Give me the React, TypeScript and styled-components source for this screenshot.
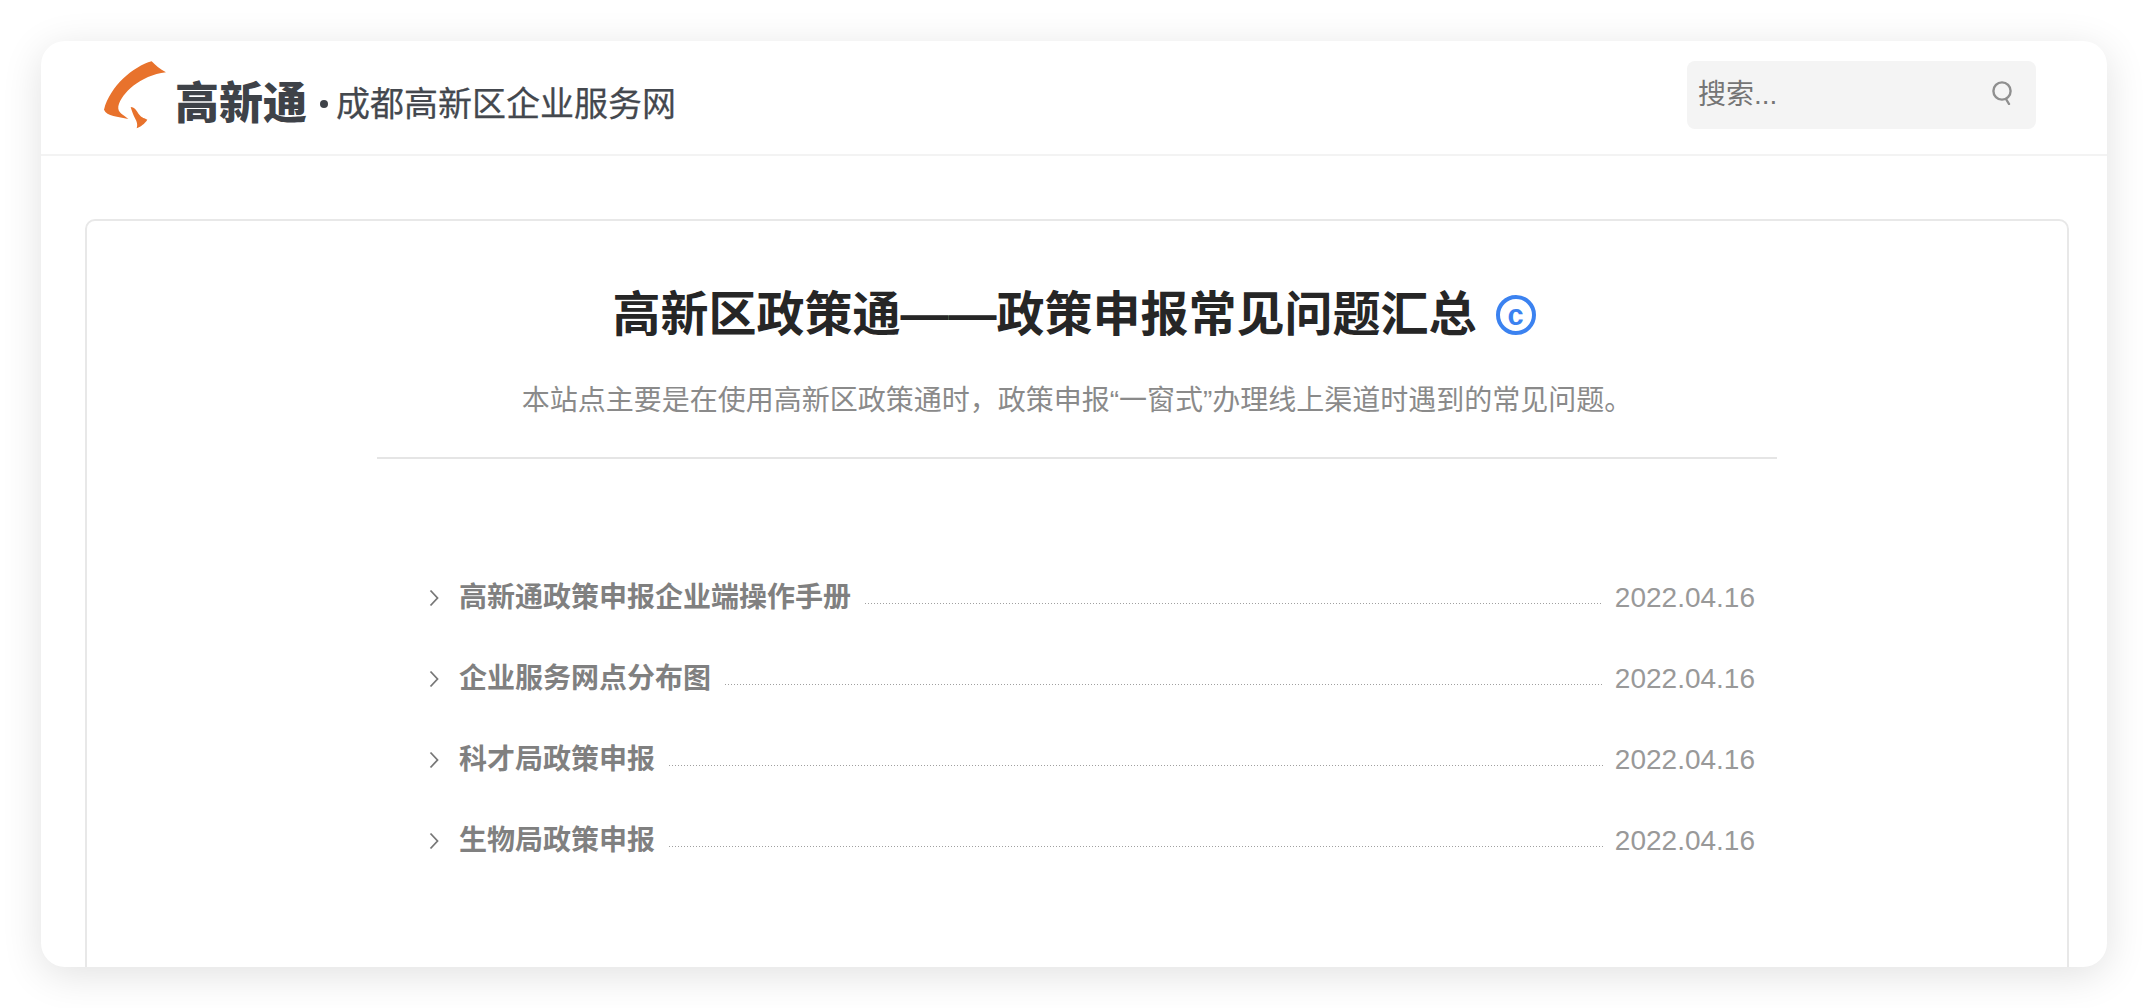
import React from 'react'
import styled, { createGlobalStyle } from 'styled-components'

const GlobalStyle = createGlobalStyle`
  html, body {
    margin: 0;
    padding: 0;
    background: #fff;
    font-family: "Liberation Sans", "Noto Sans CJK SC", sans-serif;
  }
  * {
    box-sizing: border-box;
  }
`

const items = [
  { id: 1, title: '高新通政策申报企业端操作手册', date: '2022.04.16' },
  { id: 2, title: '企业服务网点分布图', date: '2022.04.16' },
  { id: 3, title: '科才局政策申报', date: '2022.04.16' },
  { id: 4, title: '生物局政策申报', date: '2022.04.16' }
]

const App = () => {
  return (
    <Page>
      <GlobalStyle />
      <Frame>
        <Header>
          <Logo>
            <svg width="70" height="75" viewBox="30 25 210 225">
              <path
                fill="#e8722c"
                d="M185 35 C130 50 60 110 42 180 C50 200 85 200 115 208 C100 195 82 190 85 170 C95 130 150 78 228 68 C210 60 195 45 185 35 Z"
              />
              <path
                fill="#e8722c"
                d="M122 172 C135 172 140 185 148 195 C155 205 165 205 172 210 C165 222 150 232 140 236 C145 222 138 212 132 200 C128 190 125 182 122 172 Z"
              />
            </svg>
            <LogoName>高新通</LogoName>
            <LogoDot />
            <LogoSlogan>成都高新区企业服务网</LogoSlogan>
          </Logo>
          <Search>
            <SearchInput placeholder="搜索..." />
            <SearchIcon width="22" height="24" viewBox="0 0 22 24" fill="none" stroke="#8f8f8f" strokeWidth="2.4">
              <circle cx="11" cy="10" r="8.6" />
              <path d="M15 18 L18 23" strokeLinecap="round" />
            </SearchIcon>
          </Search>
        </Header>
        <Body>
          <Card>
            <Intro>
              <TitleRow>
                <Title>高新区政策通——政策申报常见问题汇总</Title>
                <CopyMark>c</CopyMark>
              </TitleRow>
              <Subtitle>本站点主要是在使用高新区政策通时，政策申报“一窗式”办理线上渠道时遇到的常见问题。</Subtitle>
            </Intro>
            <List>
              {items.map((item) => (
                <Row key={item.id}>
                  <svg width="10" height="18" viewBox="0 0 10 18" fill="none" stroke="#777" strokeWidth="1.8">
                    <path d="M1.5 1.5 L8.5 9 L1.5 16.5" />
                  </svg>
                  <RowTitle>{item.title}</RowTitle>
                  <Dots />
                  <RowDate>{item.date}</RowDate>
                </Row>
              ))}
            </List>
          </Card>
        </Body>
      </Frame>
    </Page>
  )
}

const Page = styled.div`
  height: 1008px;
  padding: 41px 41px 0;
  overflow: hidden;
`
const Frame = styled.div`
  height: 926px;
  background: #fff;
  border-radius: 24px;
  box-shadow: 0 8px 40px rgba(0, 0, 0, 0.12);
  overflow: hidden;
  display: flex;
  flex-direction: column;
`
const Header = styled.div`
  flex: 0 0 115px;
  display: flex;
  align-items: center;
  justify-content: space-between;
  padding: 0 71px 5px 59px;
  border-bottom: 2px solid #f3f3f3;
`
const Logo = styled.div`
  display: flex;
  align-items: center;
`
const LogoName = styled.span`
  margin: 18px 0 0 5px;
  font-size: 44px;
  line-height: 48px;
  font-weight: 900;
  color: #3e4248;
`
const LogoDot = styled.span`
  width: 8px;
  height: 8px;
  margin: 18px 8px 0 13px;
  border-radius: 50%;
  background: #3e4248;
`
const LogoSlogan = styled.span`
  margin-top: 18px;
  font-size: 34px;
  line-height: 40px;
  font-weight: 400;
  color: #44484e;
  -webkit-text-stroke: 0.25px #44484e;
`
const Search = styled.div`
  width: 349px;
  height: 68px;
  display: flex;
  align-items: center;
  padding: 0 23px 0 11px;
  background: #f4f4f4;
  border-radius: 8px;
`
const SearchInput = styled.input`
  flex: 1;
  min-width: 0;
  border: 0;
  outline: 0;
  padding: 0;
  background: transparent;
  font-family: inherit;
  font-size: 28px;
  color: #757575;
  &::placeholder {
    color: #757575;
    opacity: 1;
  }
`
const SearchIcon = styled.svg`
  margin-bottom: 4px;
`
const Body = styled.div`
  flex: 1;
  min-height: 0;
  padding: 63px 38px 0 44px;
`
const Card = styled.div`
  min-height: 1000px;
  border: 2px solid #e8e8e8;
  border-radius: 10px;
  padding: 64px 0 0;
`
const Intro = styled.div`
  width: 1400px;
  margin: 0 auto;
  padding-bottom: 36px;
  border-bottom: 2px solid #e5e5e5;
  display: flex;
  flex-direction: column;
  align-items: center;
`
const TitleRow = styled.div`
  display: flex;
  align-items: center;
  gap: 19px;
  padding-right: 6px;
`
const Title = styled.h1`
  margin: 0;
  font-size: 48px;
  line-height: 60px;
  font-weight: 700;
  color: #262626;
`
const CopyMark = styled.span`
  width: 40px;
  height: 40px;
  border: 4px solid #3b82f0;
  border-radius: 50%;
  display: flex;
  align-items: center;
  justify-content: center;
  font-size: 29px;
  line-height: 28px;
  font-weight: 700;
  color: #3b82f0;
`
const Subtitle = styled.p`
  margin: 36px 0 0;
  font-size: 28px;
  line-height: 40px;
  color: #8a8a8a;
`
const List = styled.div`
  width: 1400px;
  margin: 98px auto 0;
  padding: 0 22px 0 52px;
`
const Row = styled.div`
  height: 81px;
  display: flex;
  align-items: center;
`
const RowTitle = styled.span`
  margin-left: 20px;
  font-size: 28px;
  line-height: 40px;
  font-weight: 700;
  color: #808080;
`
const Dots = styled.span`
  flex: 1;
  height: 1px;
  margin: 12px 12px 0 14px;
  background: repeating-linear-gradient(to right, #a0a0a0 0, #a0a0a0 1px, transparent 1px, transparent 3px);
`
const RowDate = styled.span`
  font-size: 28px;
  line-height: 40px;
  color: #999;
`

export default App
